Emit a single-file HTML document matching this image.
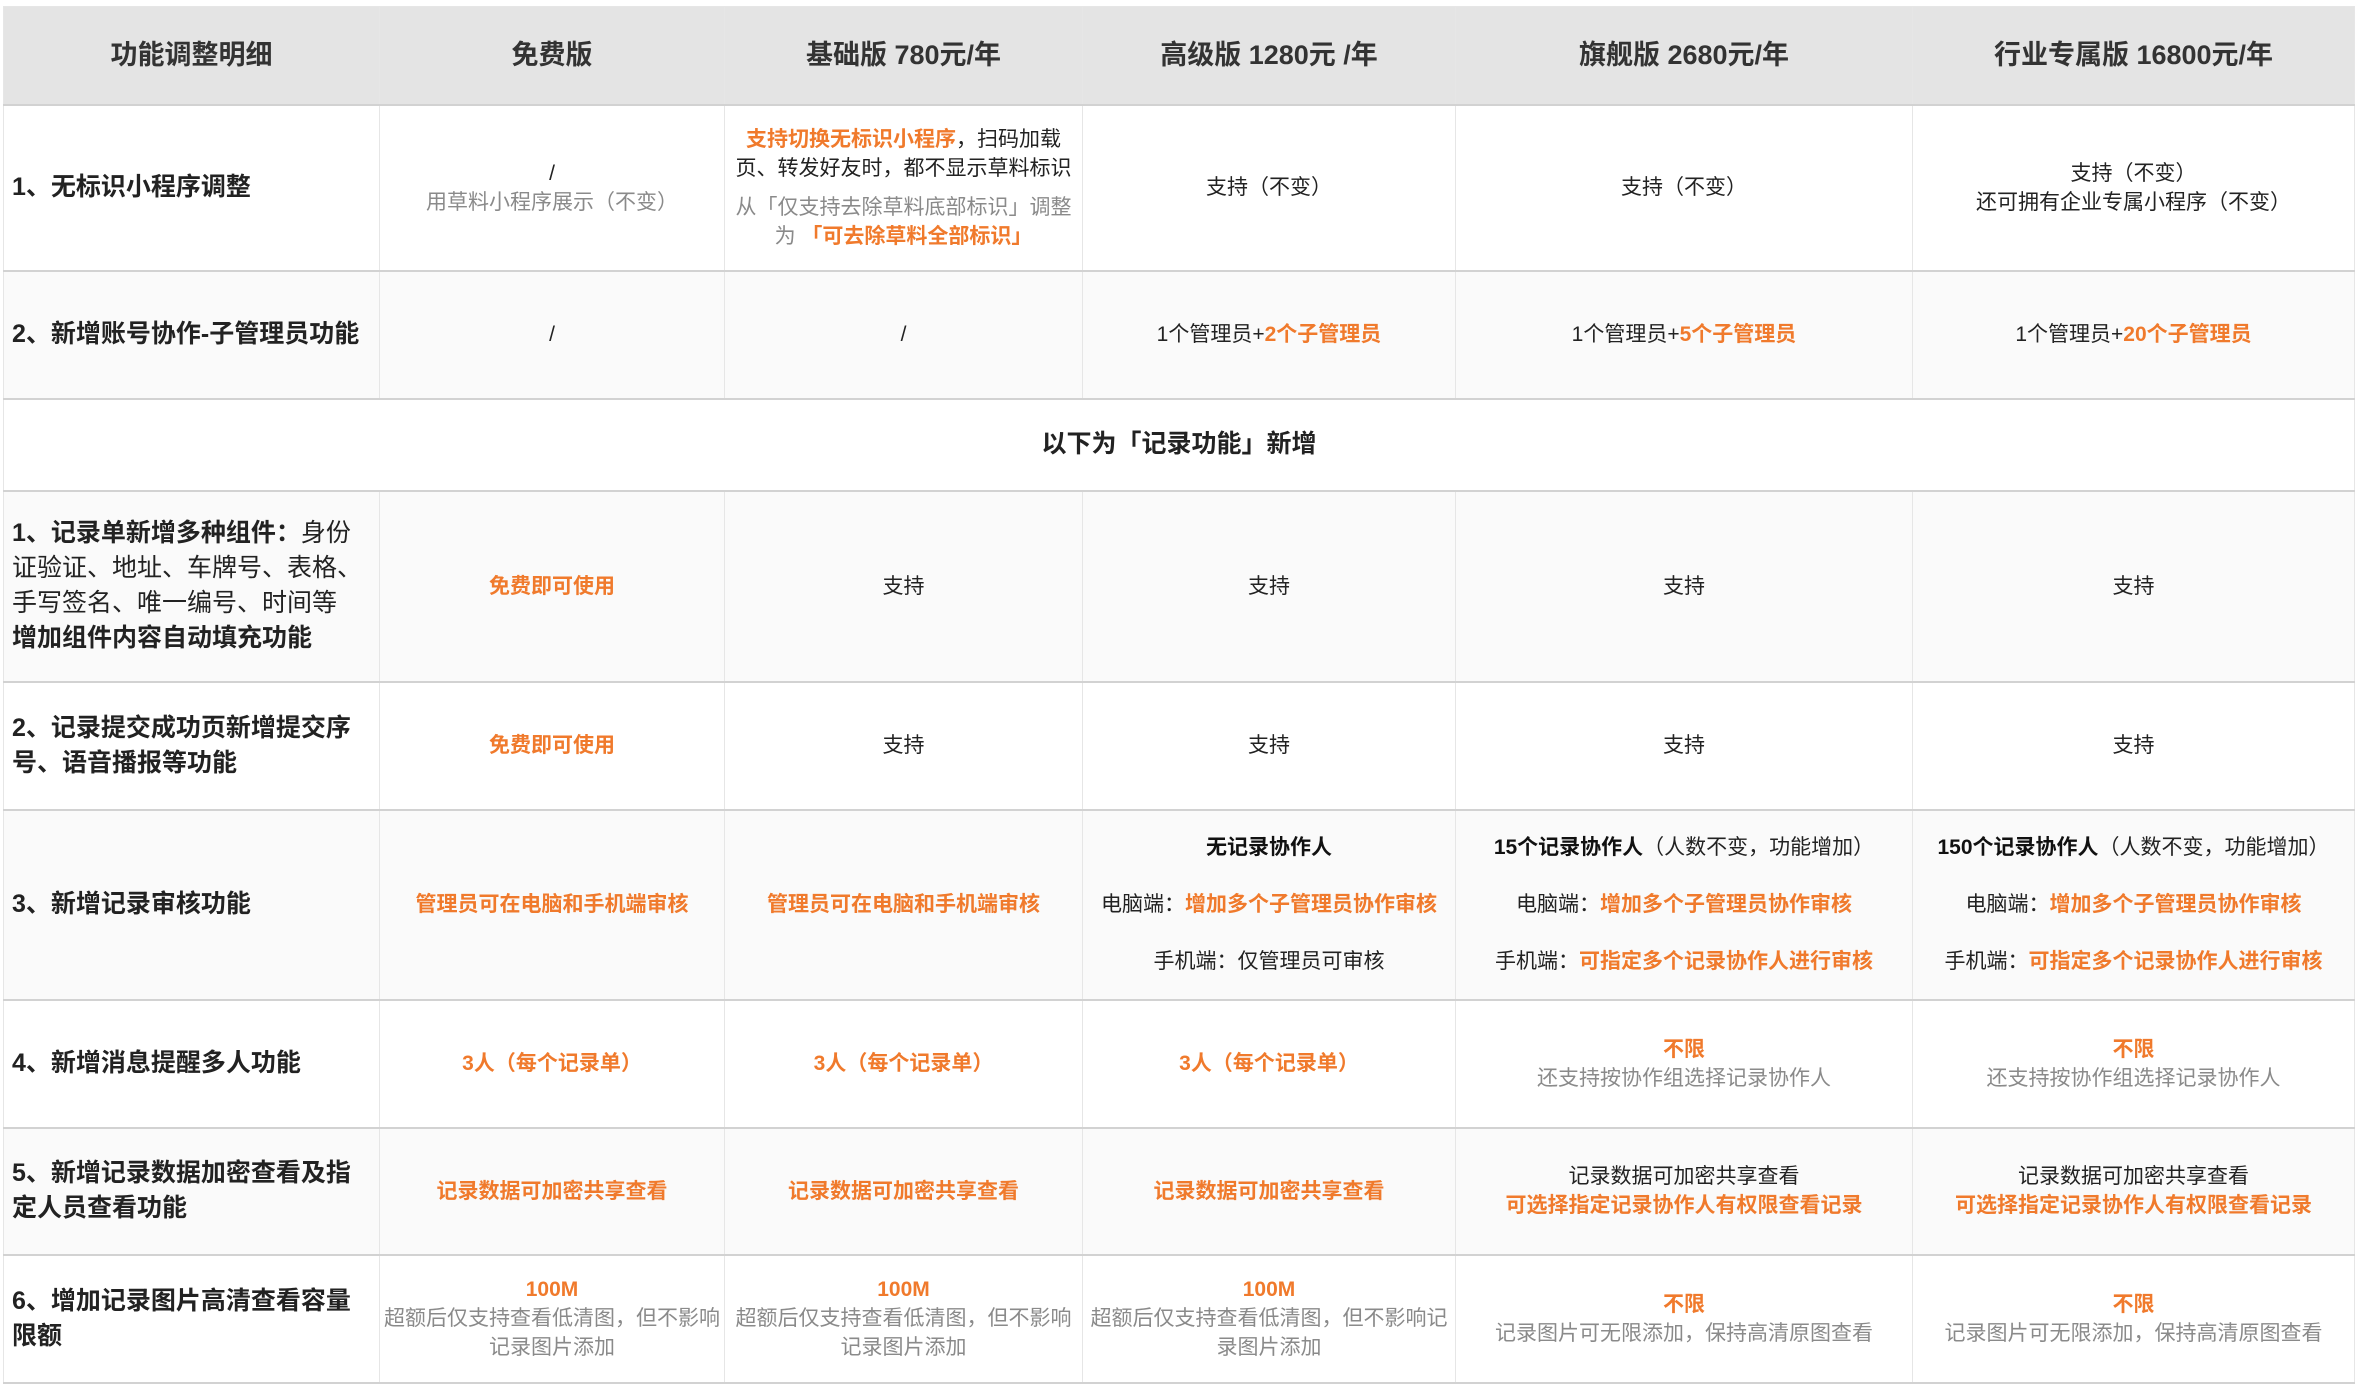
<!DOCTYPE html>
<html><head><meta charset="utf-8"><style>
body{margin:0;background:#fff;width:2360px;height:1389px;overflow:hidden;font-family:"Liberation Sans","Noto Sans CJK SC",sans-serif;color:#222}
table{position:absolute;left:3px;top:6px;border-collapse:collapse;table-layout:fixed;width:2351px}
td{border:1px solid #e6e6e6;border-bottom:2px solid #d2d2d2;text-align:center;vertical-align:middle;font-size:21px;line-height:29px;padding:0 4px}
tr.h td{background:#e4e4e4;font-size:27px;font-weight:bold;color:#333}
tr.g td{background:#fafafa}
td.l{text-align:left;font-size:25px;font-weight:bold;line-height:35px;padding-left:8px;color:#222}
td.l span{font-weight:normal}
.o{color:#f07a2c;font-weight:bold}
.gr{color:#8a8a8a}
.b{font-weight:bold;color:#111}
.sec{font-size:25px;font-weight:bold;background:#fff}
</style></head><body>
<table>
<colgroup><col style="width:376px"><col style="width:345px"><col style="width:358px"><col style="width:373px"><col style="width:457px"><col style="width:442px"></colgroup>
<tr class="h" style="height:98px"><td>功能调整明细</td><td>免费版</td><td>基础版 780元/年</td><td>高级版 1280元 /年</td><td>旗舰版 2680元/年</td><td>行业专属版 16800元/年</td></tr>
<tr style="height:166px"><td class="l">1、无标识小程序调整</td><td>/<br><span class="gr">用草料小程序展示（不变）</span></td><td><span class="o">支持切换无标识小程序</span>，扫码加载页、转发好友时，都不显示草料标识<div style="height:10px"></div><span class="gr">从「仅支持去除草料底部标识」调整为</span> <span class="o">「可去除草料全部标识」</span></td><td>支持（不变）</td><td>支持（不变）</td><td>支持（不变）<br>还可拥有企业专属小程序（不变）</td></tr>
<tr class="g" style="height:128px"><td class="l">2、新增账号协作-子管理员功能</td><td>/</td><td>/</td><td>1个管理员+<span class="o">2个子管理员</span></td><td>1个管理员+<span class="o">5个子管理员</span></td><td>1个管理员+<span class="o">20个子管理员</span></td></tr>
<tr style="height:92px"><td colspan="6" class="sec">以下为「记录功能」新增</td></tr>
<tr class="g" style="height:191px"><td class="l">1、记录单新增多种组件：<span>身份证验证、地址、车牌号、表格、手写签名、唯一编号、时间等</span><br>增加组件内容自动填充功能</td><td class="o">免费即可使用</td><td>支持</td><td>支持</td><td>支持</td><td>支持</td></tr>
<tr style="height:128px"><td class="l">2、记录提交成功页新增提交序号、语音播报等功能</td><td class="o">免费即可使用</td><td>支持</td><td>支持</td><td>支持</td><td>支持</td></tr>
<tr class="g" style="height:190px"><td class="l">3、新增记录审核功能</td><td class="o">管理员可在电脑和手机端审核</td><td class="o">管理员可在电脑和手机端审核</td><td style="line-height:57px"><span class="b">无记录协作人</span><br>电脑端：<span class="o">增加多个子管理员协作审核</span><br>手机端：仅管理员可审核</td><td style="line-height:57px"><span class="b">15个记录协作人</span>（人数不变，功能增加）<br>电脑端：<span class="o">增加多个子管理员协作审核</span><br>手机端：<span class="o">可指定多个记录协作人进行审核</span></td><td style="line-height:57px"><span class="b">150个记录协作人</span>（人数不变，功能增加）<br>电脑端：<span class="o">增加多个子管理员协作审核</span><br>手机端：<span class="o">可指定多个记录协作人进行审核</span></td></tr>
<tr style="height:128px"><td class="l">4、新增消息提醒多人功能</td><td class="o">3人（每个记录单）</td><td class="o">3人（每个记录单）</td><td class="o">3人（每个记录单）</td><td><span class="o">不限</span><br><span class="gr">还支持按协作组选择记录协作人</span></td><td><span class="o">不限</span><br><span class="gr">还支持按协作组选择记录协作人</span></td></tr>
<tr class="g" style="height:127px"><td class="l">5、新增记录数据加密查看及指定人员查看功能</td><td class="o">记录数据可加密共享查看</td><td class="o">记录数据可加密共享查看</td><td class="o">记录数据可加密共享查看</td><td>记录数据可加密共享查看<br><span class="o">可选择指定记录协作人有权限查看记录</span></td><td>记录数据可加密共享查看<br><span class="o">可选择指定记录协作人有权限查看记录</span></td></tr>
<tr style="height:128px"><td class="l">6、增加记录图片高清查看容量限额</td><td><span class="o">100M</span><br><span class="gr">超额后仅支持查看低清图，但不影响记录图片添加</span></td><td><span class="o">100M</span><br><span class="gr">超额后仅支持查看低清图，但不影响记录图片添加</span></td><td><span class="o">100M</span><br><span class="gr">超额后仅支持查看低清图，但不影响记录图片添加</span></td><td><span class="o">不限</span><br><span class="gr">记录图片可无限添加，保持高清原图查看</span></td><td><span class="o">不限</span><br><span class="gr">记录图片可无限添加，保持高清原图查看</span></td></tr>
</table>
</body></html>
